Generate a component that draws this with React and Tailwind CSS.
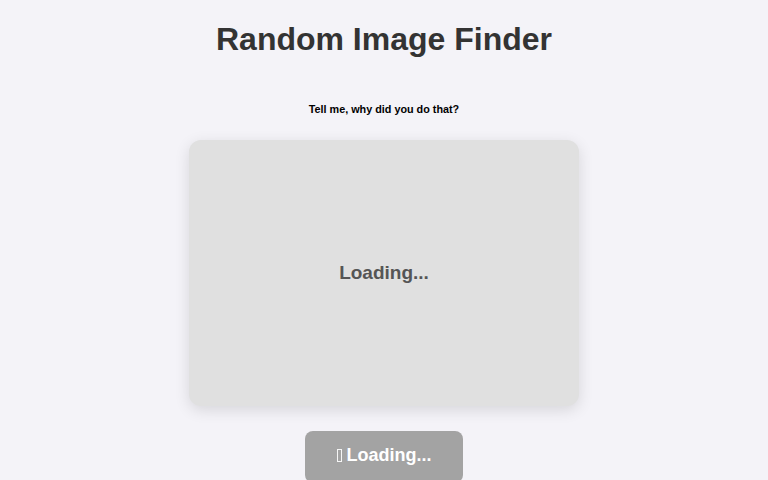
export default function App() {
  return (
    <div className="min-h-[480px] bg-[#f4f3f8] flex flex-col items-center font-['Liberation_Sans',Arial,sans-serif]">
      <h1 className="mt-[21px] text-[32px] leading-[37px] font-bold text-[#333333]">Random Image Finder</h1>
      <p className="mt-[45px] text-[10.8px] leading-[13px] font-bold text-black">Tell me, why did you do that?</p>
      <div className="mt-[24px] w-[390px] h-[266px] rounded-[12px] bg-[#e0e0e0] shadow-[0_4px_15px_rgba(0,0,0,0.12)] flex items-center justify-center">
        <span className="text-[19px] font-bold text-[#555555]">Loading...</span>
      </div>
      <button className="mt-[25px] w-[158px] h-[52px] pb-[4px] rounded-[8px] bg-[#a3a3a3] text-white text-[18px] font-bold flex items-center justify-center gap-[5px]">
        <span className="inline-block w-[5px] h-[13px] border border-white/90"></span>
        <span>Loading...</span>
      </button>
    </div>
  );
}
